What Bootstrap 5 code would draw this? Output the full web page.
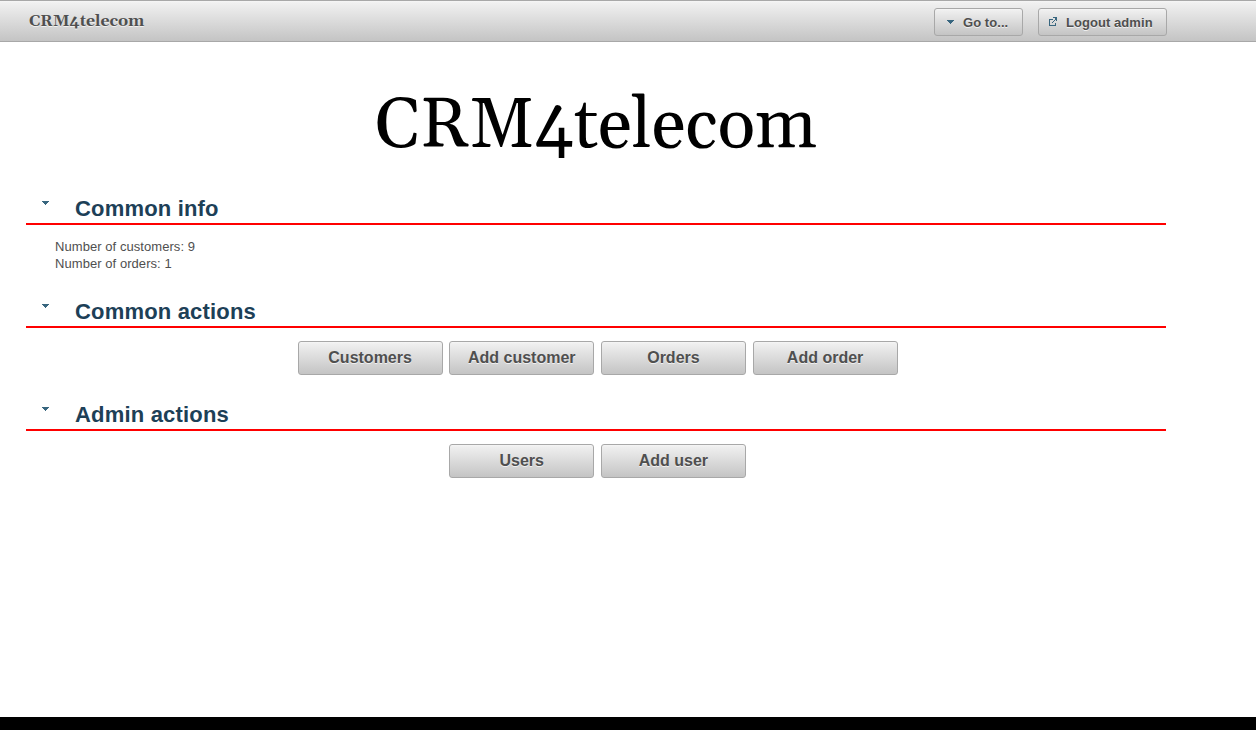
<!DOCTYPE html>
<html lang="en">
<head>
<meta charset="utf-8">
<title>CRM4telecom</title>
<link href="https://cdn.jsdelivr.net/npm/bootstrap@5.3.0/dist/css/bootstrap.min.css" rel="stylesheet">
<style>
body{font:13px/17px "Liberation Sans",Arial,sans-serif;color:#4f4f4f;background:#fff;overflow:hidden}
.topbar{height:42px;padding:7px 89px 0 29px;border:solid #a8a8a8;border-width:1px 0;background:linear-gradient(#f6f6f6 0%,#f0f0f0 5%,#c4c4c4 100%)}
.serif{font-family:Gelasio,Georgia,"Liberation Serif",serif}
.brand-name{font-size:16px;font-weight:bold;line-height:26px;letter-spacing:-.08px;text-shadow:0 1px 0 rgba(255,255,255,.7)}
.crm-btn{--bs-btn-padding-x:0;--bs-btn-padding-y:0;border:1px solid #a8a8a8;border-radius:3px;background:linear-gradient(#f6f6f6,#efefef 6%,#c4c4c4);color:#4f4f4f;font-weight:bold;text-shadow:0 1px 0 rgba(255,255,255,.7);box-shadow:none}
.tool{height:28px;font-size:13px;line-height:26px}
.tool span{margin-left:8px;padding-top:2px;letter-spacing:.06px}
.tool-goto{width:89px;margin-right:15px;padding-left:12px}
.tool-goto span{margin-left:7px}
.tool-logout{width:129px;padding-left:10px}
.tool-logout svg{margin-top:-1px}
.action{width:145px;height:34px;font-size:16px;line-height:30px;padding-bottom:1px}
.action-row{gap:6.67px;padding-left:3.2px}
.main-col{width:1140px;margin-left:26px}
.hero{font-size:70px;line-height:84px;color:#000;margin:43px 0 0;font-weight:400;height:106px}
.section-head{height:34px;border-bottom:2px solid #f00}
.section-head svg{margin:10px 0 0 15px}
.section-head h2{font-size:22px;line-height:26px;font-weight:bold;color:#1d4057;margin:5px 0 0 25px;letter-spacing:.18px}
.section-body{height:69px;padding-top:13px}
.stats{padding-left:29px;letter-spacing:.06px}
.footer-strip{height:13px;background:#000}
</style>
</head>
<body class="vh-100 d-flex flex-column">
<header class="topbar d-flex justify-content-between align-items-start flex-shrink-0">
  <div class="serif brand-name">CRM4telecom</div>
  <div class="d-flex">
    <button class="btn crm-btn tool tool-goto d-flex align-items-center"><svg width="9" height="5" shape-rendering="crispEdges" fill="#38667f"><path d="M0 0h7v1H0zM1 1h5v1H1zM2 2h3v1H2zM3 3h1v1H3z"/></svg><span>Go to...</span></button>
    <button class="btn crm-btn tool tool-logout d-flex align-items-center"><svg width="9" height="9" shape-rendering="crispEdges" fill="#38667f"><path d="M0 2h4v1H1v5h5V6h1v3H0zM4 0h4v4H7V2H6V1H4zM6 2h1v1H6zM5 3h1v1H5zM4 4h1v1H4zM3 5h1v1H3z"/></svg><span>Logout admin</span></button>
  </div>
</header>
<main class="main-col flex-grow-1">
  <h1 class="serif hero text-center">CRM4telecom</h1>
  <section>
    <div class="section-head d-flex align-items-start"><svg width="9" height="5" shape-rendering="crispEdges" fill="#38667f"><path d="M1 0h7v1H1zM2 1h5v1H2zM3 2h3v1H3zM4 3h1v1H4z"/></svg><h2>Common info</h2></div>
    <div class="section-body stats">Number of customers: 9<br>Number of orders: 1</div>
  </section>
  <section>
    <div class="section-head d-flex align-items-start"><svg width="9" height="5" shape-rendering="crispEdges" fill="#38667f"><path d="M1 0h7v1H1zM2 1h5v1H2zM3 2h3v1H3zM4 3h1v1H4z"/></svg><h2>Common actions</h2></div>
    <div class="section-body d-flex justify-content-center align-items-start action-row">
      <button class="btn crm-btn action">Customers</button><button class="btn crm-btn action">Add customer</button><button class="btn crm-btn action">Orders</button><button class="btn crm-btn action">Add order</button>
    </div>
  </section>
  <section>
    <div class="section-head d-flex align-items-start"><svg width="9" height="5" shape-rendering="crispEdges" fill="#38667f"><path d="M1 0h7v1H1zM2 1h5v1H2zM3 2h3v1H3zM4 3h1v1H4z"/></svg><h2>Admin actions</h2></div>
    <div class="section-body d-flex justify-content-center align-items-start action-row">
      <button class="btn crm-btn action">Users</button><button class="btn crm-btn action">Add user</button>
    </div>
  </section>
</main>
<div class="footer-strip flex-shrink-0"></div>
<script src="https://cdn.jsdelivr.net/npm/bootstrap@5.3.0/dist/js/bootstrap.bundle.min.js"></script>
</body>
</html>
